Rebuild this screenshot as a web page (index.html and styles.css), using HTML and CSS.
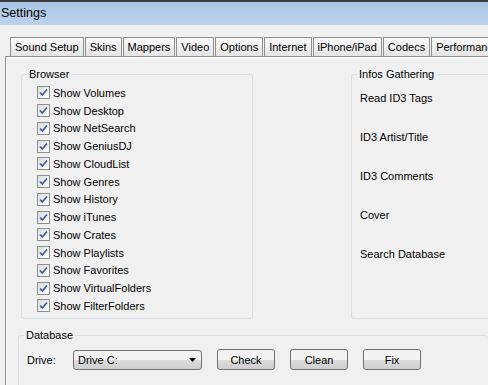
FILE: index.html
```html
<!DOCTYPE html>
<html>
<head>
    <title>Settings</title>
    <link rel="stylesheet" href="styles.css">
</head>
<body>
    <div class="titlebar">Settings</div>

    <div class="tabs">
        <div class="tab">Sound Setup</div>
        <div class="tab">Skins</div>
        <div class="tab">Mappers</div>
        <div class="tab">Video</div>
        <div class="tab">Options</div>
        <div class="tab">Internet</div>
        <div class="tab">iPhone/iPad</div>
        <div class="tab">Codecs</div>
        <div class="tab">Performance</div>
    </div>

    <div class="panel">
        <div class="groups">
            <fieldset class="group browser">
                <legend>Browser</legend>
                <div class="checks">
                    <label class="check"><span class="box"><svg width="11" height="11" viewBox="0 0 11 11"><path d="M2 5.5 L4.3 8 L9 2.5" fill="none" stroke="#3d5a9e" stroke-width="1.7"/></svg></span>Show Volumes</label>
                    <label class="check"><span class="box"><svg width="11" height="11" viewBox="0 0 11 11"><path d="M2 5.5 L4.3 8 L9 2.5" fill="none" stroke="#3d5a9e" stroke-width="1.7"/></svg></span>Show Desktop</label>
                    <label class="check"><span class="box"><svg width="11" height="11" viewBox="0 0 11 11"><path d="M2 5.5 L4.3 8 L9 2.5" fill="none" stroke="#3d5a9e" stroke-width="1.7"/></svg></span>Show NetSearch</label>
                    <label class="check"><span class="box"><svg width="11" height="11" viewBox="0 0 11 11"><path d="M2 5.5 L4.3 8 L9 2.5" fill="none" stroke="#3d5a9e" stroke-width="1.7"/></svg></span>Show GeniusDJ</label>
                    <label class="check"><span class="box"><svg width="11" height="11" viewBox="0 0 11 11"><path d="M2 5.5 L4.3 8 L9 2.5" fill="none" stroke="#3d5a9e" stroke-width="1.7"/></svg></span>Show CloudList</label>
                    <label class="check"><span class="box"><svg width="11" height="11" viewBox="0 0 11 11"><path d="M2 5.5 L4.3 8 L9 2.5" fill="none" stroke="#3d5a9e" stroke-width="1.7"/></svg></span>Show Genres</label>
                    <label class="check"><span class="box"><svg width="11" height="11" viewBox="0 0 11 11"><path d="M2 5.5 L4.3 8 L9 2.5" fill="none" stroke="#3d5a9e" stroke-width="1.7"/></svg></span>Show History</label>
                    <label class="check"><span class="box"><svg width="11" height="11" viewBox="0 0 11 11"><path d="M2 5.5 L4.3 8 L9 2.5" fill="none" stroke="#3d5a9e" stroke-width="1.7"/></svg></span>Show iTunes</label>
                    <label class="check"><span class="box"><svg width="11" height="11" viewBox="0 0 11 11"><path d="M2 5.5 L4.3 8 L9 2.5" fill="none" stroke="#3d5a9e" stroke-width="1.7"/></svg></span>Show Crates</label>
                    <label class="check"><span class="box"><svg width="11" height="11" viewBox="0 0 11 11"><path d="M2 5.5 L4.3 8 L9 2.5" fill="none" stroke="#3d5a9e" stroke-width="1.7"/></svg></span>Show Playlists</label>
                    <label class="check"><span class="box"><svg width="11" height="11" viewBox="0 0 11 11"><path d="M2 5.5 L4.3 8 L9 2.5" fill="none" stroke="#3d5a9e" stroke-width="1.7"/></svg></span>Show Favorites</label>
                    <label class="check"><span class="box"><svg width="11" height="11" viewBox="0 0 11 11"><path d="M2 5.5 L4.3 8 L9 2.5" fill="none" stroke="#3d5a9e" stroke-width="1.7"/></svg></span>Show VirtualFolders</label>
                    <label class="check"><span class="box"><svg width="11" height="11" viewBox="0 0 11 11"><path d="M2 5.5 L4.3 8 L9 2.5" fill="none" stroke="#3d5a9e" stroke-width="1.7"/></svg></span>Show FilterFolders</label>
                </div>
            </fieldset>

            <fieldset class="group infos">
                <legend>Infos Gathering</legend>
                <div class="info-list">
                    <div class="info">Read ID3 Tags</div>
                    <div class="info">ID3 Artist/Title</div>
                    <div class="info">ID3 Comments</div>
                    <div class="info">Cover</div>
                    <div class="info">Search Database</div>
                </div>
            </fieldset>
        </div>

        <fieldset class="group database">
            <legend>Database</legend>
            <div class="db-row">
                <span class="drive-label">Drive:</span>
                <div class="combo">
                    <span>Drive C:</span>
                    <svg width="7" height="4" viewBox="0 0 7 4"><path d="M0 0 H7 L3.5 4 Z" fill="#000"/></svg>
                </div>
                <button class="btn">Check</button>
                <button class="btn">Clean</button>
                <button class="btn">Fix</button>
            </div>
        </fieldset>
    </div>
</body>
</html>
```

FILE: styles.css
```css
body {
    margin: 0;
    background-color: #f0f0f0;
    font-family: "Liberation Sans", Arial, sans-serif;
    font-size: 11px;
    color: #000;
    overflow: hidden;
    height: 385px;
}

.titlebar {
    height: 23px;
    border-top: 2px solid #3c3c3c;
    background: linear-gradient(#a9c4e4, #bcd3ec);
    font-size: 12.5px;
    line-height: 23px;
    padding-left: 1px;
}

/* tab strip */
.tabs {
    display: flex;
    gap: 1px;
    margin-top: 12px;
    padding-left: 10px;
    white-space: nowrap;
    overflow: hidden;
}

.tab {
    height: 18px;
    line-height: 18px;
    padding: 0 4px;
    border: 1px solid #8e8f8f;
    border-bottom: none;
    background: linear-gradient(#fafafa, #e4e4e4);
}

.panel {
    margin-left: 5px;
    border-top: 1px solid #8e8f8f;
    border-left: 1px solid #8e8f8f;
    box-shadow: inset 1px 1px #ffffff;
    height: 340px;
}

.groups {
    display: flex;
    padding: 11px 0 0 15px;
    gap: 98px;
}

.group {
    margin: 0;
    padding: 0;
    border: 1px solid #d5dfe5;
    border-radius: 3px;
}

.group legend {
    margin-left: 5px;
    padding: 0 2px;
    line-height: 13px;
}

.browser {
    width: 230px;
}

.checks {
    display: flex;
    flex-direction: column;
    padding: 3px 0 0 15px;
    height: 233px;
}

.check {
    display: flex;
    align-items: center;
    height: 17.75px;
}

.box {
    display: flex;
    align-items: center;
    justify-content: center;
    width: 11px;
    height: 11px;
    margin-right: 3px;
    border: 1px solid #8e8f8f;
    background: linear-gradient(135deg, #dcdcdc, #ffffff);
}

.infos {
    flex: 1;
    border-right: none;
    border-radius: 3px 0 0 3px;
}

.info-list {
    padding: 11px 0 0 8px;
    height: 226px;
}

.info {
    height: 39px;
    line-height: 13px;
}

.database {
    margin: 10px 0 0 12px;
    border-right: none;
    height: 60px;
}

.db-row {
    display: flex;
    align-items: center;
    padding: 7px 0 0 8px;
}

.drive-label {
    width: 46px;
}

.combo {
    display: flex;
    align-items: center;
    justify-content: space-between;
    box-sizing: border-box;
    width: 129px;
    height: 20px;
    padding: 0 5px 0 4px;
    border: 1px solid #707070;
    border-radius: 3px;
    background: linear-gradient(#f2f2f2 50%, #dddddd 50%, #cfcfcf);
}

.btn {
    box-sizing: border-box;
    width: 58px;
    height: 21px;
    margin-left: 15px;
    padding: 0;
    border: 1px solid #707070;
    border-radius: 3px;
    background: linear-gradient(#f2f2f2 50%, #dddddd 50%, #cfcfcf);
    font-family: inherit;
    font-size: 11px;
    color: #000;
}
```
